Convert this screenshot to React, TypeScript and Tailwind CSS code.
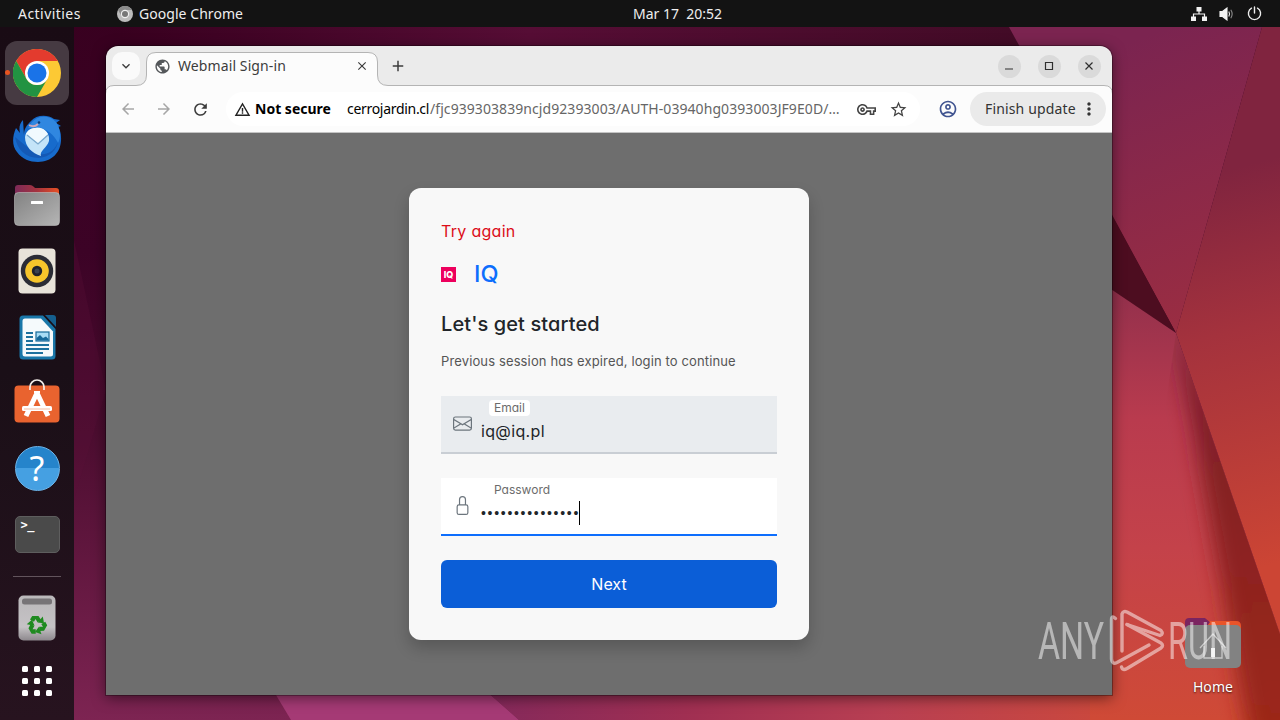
import React from 'react';
import {
    MdPublic, MdClose, MdAdd, MdKeyboardArrowDown, MdArrowBack, MdArrowForward, MdRefresh,
    MdWarningAmber, MdOutlineVpnKey, MdStarBorder, MdOutlineAccountCircle, MdMoreVert,
} from 'react-icons/md';
import { BsEnvelope, BsLock } from 'react-icons/bs';

const Wallpaper = () => (
    <svg className="absolute inset-0" width="1280" height="720" viewBox="0 0 1280 720">
        <defs>
            <linearGradient id="base" x1="0" y1="0" x2="0" y2="1">
                <stop offset="0" stopColor="#38001f" />
                <stop offset="0.35" stopColor="#3c0326" />
                <stop offset="0.6" stopColor="#4c0d30" />
                <stop offset="1" stopColor="#7d2452" />
            </linearGradient>
            <linearGradient id="top" x1="0" y1="0" x2="1" y2="0">
                <stop offset="0" stopColor="#38001f" />
                <stop offset="0.45" stopColor="#560d35" />
                <stop offset="1" stopColor="#420b26" />
            </linearGradient>
            <linearGradient id="bottom" x1="0" y1="0" x2="1" y2="0">
                <stop offset="0" stopColor="#84295b" />
                <stop offset="0.3" stopColor="#a02f52" />
                <stop offset="0.6" stopColor="#b83f52" />
                <stop offset="1" stopColor="#ce4a39" />
            </linearGradient>
            <linearGradient id="facetA" x1="1080" y1="60" x2="1180" y2="330" gradientUnits="userSpaceOnUse">
                <stop offset="0" stopColor="#7b2450" />
                <stop offset="1" stopColor="#9a2d42" />
            </linearGradient>
            <linearGradient id="facetB" x1="1190" y1="180" x2="1290" y2="560" gradientUnits="userSpaceOnUse">
                <stop offset="0" stopColor="#80243f" />
                <stop offset="0.4" stopColor="#a4323d" />
                <stop offset="1" stopColor="#cc4534" />
            </linearGradient>
            <linearGradient id="facetC" x1="0" y1="290" x2="0" y2="720" gradientUnits="userSpaceOnUse">
                <stop offset="0" stopColor="#93304c" />
                <stop offset="0.3" stopColor="#b93b4e" />
                <stop offset="0.6" stopColor="#c4424a" />
                <stop offset="1" stopColor="#cf4a36" />
            </linearGradient>
            <linearGradient id="fold" x1="0" y1="333" x2="0" y2="720" gradientUnits="userSpaceOnUse">
                <stop offset="0" stopColor="#731b2a" />
                <stop offset="0.5" stopColor="#8a2222" />
                <stop offset="1" stopColor="#9c2819" />
            </linearGradient>
            <clipPath id="foldClip"><path d="M1176 333L1280 634V720H1120Z" /></clipPath>
            <filter id="soften" x="-50%" y="-20%" width="200%" height="140%"><feGaussianBlur stdDeviation="10" /></filter>
        </defs>
        <rect width="1280" height="720" fill="url(#base)" />
        <path d="M74 240L106 390L74 500Z" fill="#5a1238" opacity="0.3" />
        <path d="M120 27H1030V60H120Z" fill="url(#top)" />
        <path d="M273 690L291 720H519L485 690Z" fill="#a53a75" />
        <path d="M485 690L519 720H1150V690Z" fill="url(#bottom)" />
        <path d="M1009 27H1262L1176 333Z" fill="url(#facetA)" />
        <path d="M1262 27H1280V634L1176 333Z" fill="url(#facetB)" />
        <path d="M1050 100L1176 333L1080 270Z" fill="#4d0d20" />
        <path d="M1090 275L1176 333L1280 634V720H1090Z" fill="url(#facetC)" />
        <g clipPath="url(#foldClip)">
            <path d="M1174 320L1320 634V760H1252Z" fill="url(#fold)" filter="url(#soften)" />
        </g>
    </svg>
);

const ChromeIcon = () => (
    <svg width="48" height="48" viewBox="0 0 48 48">
        <circle cx="24" cy="24" r="24" fill="#fcc934" />
        <path d="M3.2 12A24 24 0 0 1 44.8 12H24L13.6 30Z" fill="#e33b2e" />
        <path d="M3.2 12A24 24 0 0 0 24 48L34.4 30A12 12 0 0 1 13.6 30Z" fill="#229342" />
        <circle cx="24" cy="24" r="12" fill="#fff" />
        <circle cx="24" cy="24" r="9.5" fill="#1a73e8" />
    </svg>
);

const ThunderbirdIcon = () => (
    <svg width="50" height="48" viewBox="0 0 50 48">
        <path d="M11 5C7 9 7 14 8 18L4 13C0 22 0 31 5 37C10 44 18 47 26 47C40 47 50 37 49 22C49 18 48 15 46 12L49 11L44 8L48 5L42 4C35-1 24 0 19 6C14 11 12 14 12 20Z" fill="#176bcc" />
        <path d="M20 7C26 0 38 0 44 7C49 14 49 23 46 28C42 20 35 13 25 13L16 13Z" fill="#3087e0" />
        <path d="M3 22C5 34 13 43 27 43C38 42 45 35 46 26C44 35 36 40 28 39L14 31Z" fill="#1459b5" />
        <path d="M13 22C14 15 21 12 27 13C34 14 38 20 37 26C35 33 27 36 29 41C20 38 13 32 13 22Z" fill="#c4e4f8" />
        <path d="M14 19L26 28L36 19C34 15 29 12 24 13C19 13 16 15 14 19Z" fill="#f1fafe" />
        <path d="M15 20L26 29L36 20" fill="none" stroke="#7aa9cd" strokeWidth="1.2" />
        <path d="M17 10Q22 13 26 9" fill="none" stroke="#cda6b9" strokeWidth="2" />
        <circle cx="27" cy="7.5" r="1.3" fill="#0f3d78" />
    </svg>
);

const FilesIcon = () => (
    <svg width="46" height="42" viewBox="0 0 46 42">
        <defs>
            <linearGradient id="folderTab"><stop stopColor="#7d2a58" /><stop offset="0.5" stopColor="#a5333f" /><stop offset="1" stopColor="#e75024" /></linearGradient>
            <linearGradient id="folderBody" x1="0" y1="0" x2="1" y2="1"><stop stopColor="#828282" /><stop offset="1" stopColor="#b5b5b5" /></linearGradient>
        </defs>
        <path d="M1 4Q1 1 4 1H16Q18 1 20 3L21 4H42Q45 4 45 7V20H1Z" fill="url(#folderTab)" />
        <rect x="0.5" y="8.5" width="45" height="33" rx="4" fill="url(#folderBody)" stroke="#bdbdbd" strokeWidth="0.6" />
        <rect x="17" y="17" width="12" height="3" rx="0.5" fill="#fff" />
    </svg>
);

const RhythmboxIcon = () => (
    <svg width="38" height="46" viewBox="0 0 38 46">
        <rect x="0.5" y="0.5" width="37" height="45" rx="4" fill="#e8e3d9" />
        <circle cx="19" cy="23" r="16.2" fill="#2b2c35" />
        <circle cx="19" cy="23" r="11.8" fill="#f6c52b" />
        <circle cx="19" cy="23" r="5.2" fill="#20232c" />
        <circle cx="19" cy="23" r="2.5" fill="#3a4250" />
    </svg>
);

const WriterIcon = () => (
    <svg width="37" height="45" viewBox="0 0 37 45">
        <path d="M4 .5H24L36.5 14V41Q36.5 44.5 33 44.5H4Q.5 44.5 .5 41V4Q.5 .5 4 .5Z" fill="#1977a9" />
        <path d="M26 0H34Q37 0 37 3V12Z" fill="#155f8e" />
        <path d="M6 3.5H22L34 16.5V39Q34 41.5 31.5 41.5H6Q3.5 41.5 3.5 39V6Q3.5 3.5 6 3.5Z" fill="#f5fafc" />
        <path d="M7 18H14M7 22H14M7 26H14M7 30H30M7 34H30M7 38H24" stroke="#1d719e" strokeWidth="1.8" />
        <rect x="17" y="17" width="13" height="9" fill="#a8dcf5" stroke="#176a99" strokeWidth="1.2" />
        <path d="M17.5 25.5V23L21 20L24 23L27 21.5L29.5 24V25.5Z" fill="#17699a" />
    </svg>
);

const SoftwareIcon = () => (
    <svg className="-mt-1" width="46" height="46" viewBox="0 0 46 46">
        <rect x="0.5" y="7.5" width="45" height="37" rx="4" fill="#e9632f" />
        <path d="M16 12V9A7 7 0 0 1 30 9V12" fill="none" stroke="#f3eee9" strokeWidth="1.7" />
        <path d="M23 15L12 38M23 15L34 38" stroke="#fff" strokeWidth="5" />
        <path d="M20 14H26" stroke="#fff" strokeWidth="2" />
        <rect x="8" y="28" width="30" height="5" rx="1.5" fill="#fff" />
        <path d="M10 31H36" stroke="#f0a17c" strokeWidth="0.7" />
    </svg>
);

const TrashIcon = () => (
    <svg width="38" height="46" viewBox="0 0 38 46">
        <defs>
            <linearGradient id="bin" x2="0" y2="1"><stop stopColor="#bab8ba" /><stop offset="0.7" stopColor="#c5c2c5" /><stop offset="1" stopColor="#8d888d" /></linearGradient>
        </defs>
        <rect x="0.5" y="0.5" width="37" height="45" rx="5" fill="url(#bin)" />
        <rect x="4" y="3.5" width="30" height="6" rx="2.5" fill="#777477" />
        {/* three chasing arrows */}
        {[0, 120, 240].map((deg) => (
            <g key={deg} transform={`rotate(${deg} 19 30)`} fill="#1f8a20">
                <path d="M14.2 21H20.5L23 25L19.5 27.2L17.5 24L16 26.8L12 24.5Z" />
                <path d="M24.8 21.5L26 28.2L19.5 27.5Z" />
            </g>
        ))}
    </svg>
);

const DockItem = ({ active = false, children }: { active?: boolean; children: React.ReactNode }) => (
    <div className={`relative flex size-16 shrink-0 items-center justify-center rounded-xl ${active ? 'bg-[#463a42]' : ''}`}>
        {active && <span className="absolute top-[29px] left-0 size-[5px] rounded-full bg-[#e95420]" />}
        {children}
    </div>
);

const Dock = () => (
    <div className="relative flex w-[74px] shrink-0 flex-col items-center gap-0.5 bg-gradient-to-b from-[#190b14] via-[#1a0f17] to-[#27131f] pt-3.5">
        <DockItem active><ChromeIcon /></DockItem>
        <DockItem><ThunderbirdIcon /></DockItem>
        <DockItem><FilesIcon /></DockItem>
        <DockItem><RhythmboxIcon /></DockItem>
        <DockItem><WriterIcon /></DockItem>
        <DockItem><SoftwareIcon /></DockItem>
        <DockItem>
            <div className="-mt-px flex size-[45px] items-center justify-center rounded-full border border-[#6cb6ec] bg-gradient-to-b from-[#2584cb] from-50% to-[#45a0e2] to-50% font-['Noto_Sans'] text-[34px] text-white">?</div>
        </DockItem>
        <DockItem>
            <div className="-mt-0.5 h-[37px] w-[45px] rounded-[5px] border border-[#5e5e5e] bg-[#4a4a4a] pl-[5px] font-['DejaVu_Sans_Mono'] text-[12px] leading-[17px] font-bold tracking-[-0.5px] text-white">&gt;_</div>
        </DockItem>
        <div className="my-[7px] h-px w-12 shrink-0 bg-[#62545c]" />
        <DockItem><TrashIcon /></DockItem>
        <div className="mt-[14px] grid grid-cols-3 gap-1.5">
            {Array.from({ length: 9 }, (_, i) => (
                <span key={i} className="size-1.5 rounded-[1.5px] bg-white" />
            ))}
        </div>
    </div>
);

const TopBar = () => (
    <div className="relative flex h-[27px] shrink-0 items-center bg-[#131313] text-[14px] text-[#eeeeee]">
        <span className="ml-[18px] w-[99px] tracking-[0.45px]">Activities</span>
        <svg width="16" height="16" viewBox="0 0 16 16">
            <circle cx="8" cy="8" r="8" fill="#bcbcbc" />
            <path d="M1 4A8 8 0 0 1 15 4H8L4.5 10Z" fill="#8a8a8a" />
            <circle cx="8" cy="8" r="4.2" fill="#eee" />
            <circle cx="8" cy="8" r="3" fill="#777" />
        </svg>
        <span className="ml-1.5 w-[494px] tracking-[0.05px]">Google Chrome</span>
        <span className="-mt-px whitespace-pre">Mar 17  20:52</span>
        <div className="mr-[18px] ml-auto flex items-center gap-3">
            <svg width="16" height="14" viewBox="0 0 16 14" fill="#f2f2f2">
                <path d="M5.5 0h5v4.5h-5zM0 9.5h5V14H0zM11 9.5h5V14h-5z" />
                <path d="M8 4V7M2.5 10V7H13.5V10" fill="none" stroke="#f2f2f2" strokeWidth="1.2" />
            </svg>
            <svg width="16" height="14" viewBox="0 0 16 14" fill="none" stroke="#f2f2f2" strokeWidth="1.1">
                <path d="M1 4.5H3.5L8 1V13L3.5 9.5H1Z" fill="#f2f2f2" />
                <path d="M9.8 4.5Q11.3 7 9.8 9.5" />
                <path d="M11.8 2.8Q14.5 7 11.8 11.2" stroke="#8a8a8a" />
            </svg>
            <svg width="15" height="15" viewBox="0 0 15 15" fill="none" stroke="#eee" strokeWidth="1.4" strokeLinecap="round">
                <path d="M4.5 2.2A6.1 6.1 0 1 0 10.5 2.2M7.5 1V7" />
            </svg>
        </div>
    </div>
);

const WindowButton = ({ children }: { children: React.ReactNode }) => (
    <div className="flex size-[23px] items-center justify-center rounded-full bg-[#dadada]">
        <svg width="10" height="10" viewBox="0 0 10 10" fill="none" stroke="#2e2e2e" strokeWidth="1.2">{children}</svg>
    </div>
);

const BrowserChrome = () => (
    <div className="relative h-[87px] shrink-0 border-b border-[#c4c4c4] bg-[#ebebeb] text-[14px]">
        <svg className="absolute inset-0" width="1006" height="86" viewBox="0 0 1006 86">
            <path
                d="M-.5 88V48Q-.5 39.5 8 39.5H30Q40.5 39.5 40.5 29V16Q40.5 6.5 50 6.5H262Q271.500 6.500 271.500 16V29Q271.500 39.500 282 39.500H998Q1006.500 39.500 1006.500 48V88Z"
                fill="#fcfcfc"
                stroke="#b4b4b4"
            />
        </svg>
        <div className="relative flex h-10 items-center text-[#3c3c3c]">
            <div className="ml-1.5 flex size-7 items-center justify-center rounded-[10px] bg-[#fafafa]">
                <MdKeyboardArrowDown size={16} />
            </div>
            <MdPublic size={17} className="ml-[14px] text-[#54575a]" />
            <span className="-mt-0.5 ml-[7px] w-[177px] tracking-[0.1px]">Webmail Sign-in</span>
            <MdClose size={14} />
            <MdAdd size={18} className="ml-5" />
            <div className="mr-[11.5px] ml-auto flex gap-[17px]">
                <WindowButton><path d="M1 8H9" /></WindowButton>
                <WindowButton><path d="M1.5 1.5H8.5V8.5H1.5Z" /></WindowButton>
                <WindowButton><path d="M1.500 1.500L8.500 8.500M8.500 1.500L1.500 8.500" /></WindowButton>
            </div>
        </div>
        <div className="relative flex h-[46px] items-center">
            <MdArrowBack size={18} className="ml-[13px] text-[#a6a6a6]" />
            <MdArrowForward size={18} className="ml-[18px] text-[#a6a6a6]" />
            <MdRefresh size={19} className="ml-[18px] text-[#3c3c3c]" />
            <div className="ml-[16px] flex h-[34px] w-[694px] items-center rounded-full bg-white pl-2">
                <MdWarningAmber size={17} className="text-[#222]" />
                <span className="-mt-0.5 ml-1 w-[92px] font-bold whitespace-nowrap text-black">Not secure</span>
                <span className="-mt-0.5 w-[83px] tracking-[-0.3px] whitespace-nowrap text-black">cerrojardin.cl</span>
                <span className="-mt-0.5 w-[429px] tracking-[0.07px] whitespace-nowrap text-[#666]">/fjc939303839ncjd92393003/AUTH-03940hg0393003JF9E0D/…</span>
                <MdOutlineVpnKey size={19} className="-ml-0.5 text-[#444]" />
                <MdStarBorder size={19} className="ml-[13px] text-[#444]" />
            </div>
            <MdOutlineAccountCircle size={20} className="ml-[18px] text-[#405490]" />
            <div className="ml-3 flex h-[34px] w-[136px] items-center rounded-full bg-[#eaeaea] pl-[15px] text-[#333]">
                <span className="-mt-0.5 w-[94px] tracking-[0.15px] whitespace-nowrap">Finish update</span>
                <MdMoreVert size={20} />
            </div>
        </div>
    </div>
);

const LoginCard = () => (
    <div className="flex h-[452px] w-[400px] flex-col rounded-xl bg-[#f8f8f8] px-8 pt-8 font-['Inter',sans-serif] shadow-[0_8px_16px_rgba(0,0,0,0.2)] [font-feature-settings:'cv11']">
        <p className="h-[23px] text-[16px] leading-[23px] tracking-[0.3px] text-[#dc0d18]">Try again</p>
        <div className="mt-4 flex h-[30px] items-center">
            <span className="flex size-[15px] items-center justify-center bg-[#ed005d] text-[9px] leading-none font-extrabold text-white">IQ</span>
            <span className="ml-[18px] text-[23.5px] leading-[30px] font-medium text-[#0d6efd]">IQ</span>
        </div>
        <h1 className="mt-[22px] h-[26px] text-[20px] leading-[26px] font-medium tracking-[0.1px] text-[#212529]">Let's get started</h1>
        <p className="mt-[14px] h-5 text-[13px] leading-5 tracking-[0.13px] whitespace-nowrap text-[#555]">Previous session has expired, login to continue</p>
        <div className="mt-[25px] flex h-[58px] items-center border-b-2 border-[#c9ced4] bg-[#e9ecef] pl-3">
            <BsEnvelope size={19} className="-mt-0.5 text-[#6c757d]" />
            <div className="-mt-1.5 ml-[9px] flex flex-col">
                <span className="ml-2 flex h-4 w-[41px] items-center justify-center rounded bg-white text-[12px] text-[#6c6c6c]">Email</span>
                <span className="mt-[3px] h-6 text-[16px] leading-6 tracking-[0.35px] text-[#212529]">iq@iq.pl</span>
            </div>
        </div>
        <div className="mt-6 flex h-[58px] items-center border-b-2 border-[#0d6efd] bg-white pl-3">
            <BsLock size={19} className="-mt-0.5 text-[#6c757d]" />
            <div className="-mt-1.5 ml-[9px] flex flex-col">
                <span className="ml-[13px] h-4 text-[12px] leading-4 text-[#6c6c6c]">Password</span>
                <span className="mt-[3px] flex h-6 items-center text-[#212529]">
                    <span className="w-[98px] font-['Liberation_Sans'] text-[14px] leading-6 tracking-[1.7px] whitespace-nowrap">•••••••••••••••</span>
                    <span className="h-6 w-px bg-black" />
                </span>
            </div>
        </div>
        <button className="mt-6 h-12 rounded-md bg-[#0b5ed7] pb-px text-[16px] text-white">Next</button>
    </div>
);

const BrowserWindow = () => (
    <div className="absolute top-[19px] left-8 flex h-[649px] w-[1006px] flex-col rounded-t-xl shadow-[0_0_0_1px_rgba(0,0,0,0.3),0_3px_14px_rgba(0,0,0,0.5)]">
        <div className="flex flex-1 flex-col overflow-hidden rounded-t-xl">
            <BrowserChrome />
            <div className="flex flex-1 justify-center bg-[#6e6e6e] pt-[55px]">
                <LoginCard />
            </div>
        </div>
    </div>
);

const HomeShortcut = () => (
    <div className="absolute top-[590px] left-[1111px] flex w-14 flex-col items-center">
        <svg width="56" height="52" viewBox="0 0 56 52">
            <path d="M0 5Q0 1 4 1H20L24 4H51Q56 4 56 9V20H0Z" fill="#e9542a" />
            <path d="M0 5Q0 1 4 1H20L25 5L20 12H0Z" fill="#7b2460" />
            <rect y="8" width="56" height="43" rx="5" fill="#828282" />
            <path d="M15 31L28 17L41 31M19 29V41H37V29" fill="none" stroke="#c9c9c9" strokeWidth="1.3" />
            <rect x="26" y="31" width="4" height="9" fill="#eee" />
        </svg>
        <span className="mt-[8px] text-[14px] leading-5 tracking-[0.1px] text-white [text-shadow:0_1px_2px_rgba(0,0,0,0.7)]">Home</span>
    </div>
);

const Watermark = () => (
    <svg className="absolute top-[595px] left-[1025px] opacity-50" width="240" height="92" viewBox="1025 595 240 92">
        <g fill="#fff" fontFamily="Roboto" fontSize="51">
            <text x="1038" y="659" textLength="66" lengthAdjust="spacingAndGlyphs">ANY</text>
            <text x="1168" y="659" textLength="64" lengthAdjust="spacingAndGlyphs">RUN</text>
        </g>
        <g fill="none" stroke="#fff" strokeWidth="3.4" strokeLinecap="round" strokeLinejoin="round">
            <path d="M1115.500 618.500Q1111.500 615 1111.500 620V659Q1112 665 1117 662.500L1149 645" />
            <path d="M1122 651V614Q1123 610.500 1127 612L1161 630.500Q1164 634 1160 635.500L1127 624.500" />
            <path d="M1127 624.500L1161 643Q1164 645.500 1161 648L1127 668.500Q1122.500 671 1121.500 667" />
        </g>
    </svg>
);

export default function App() {
    return (
        <div className="relative flex h-[720px] w-[1280px] flex-col overflow-hidden font-['Noto_Sans',sans-serif]">
            <Wallpaper />
            <TopBar />
            <div className="relative flex flex-1">
                <Dock />
                <div className="relative flex-1">
                    <BrowserWindow />
                    <HomeShortcut />
                </div>
            </div>
            <Watermark />
        </div>
    );
}
